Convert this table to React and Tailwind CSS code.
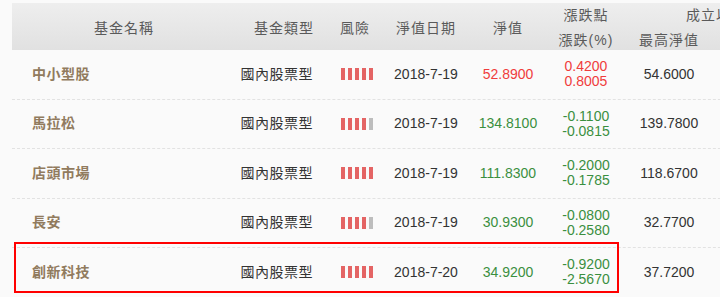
const funds = [
  { name: '中小型股', type: '國內股票型', risk: 5, date: '2018-7-19', nav: '52.8900', up: true, pts: '0.4200', pct: '0.8005', high: '54.6000' },
  { name: '馬拉松', type: '國內股票型', risk: 4, date: '2018-7-19', nav: '134.8100', up: false, pts: '-0.1100', pct: '-0.0815', high: '139.7800' },
  { name: '店頭市場', type: '國內股票型', risk: 5, date: '2018-7-19', nav: '111.8300', up: false, pts: '-0.2000', pct: '-0.1785', high: '118.6700' },
  { name: '長安', type: '國內股票型', risk: 4, date: '2018-7-19', nav: '30.9300', up: false, pts: '-0.0800', pct: '-0.2580', high: '32.7700' },
  { name: '創新科技', type: '國內股票型', risk: 5, date: '2018-7-20', nav: '34.9200', up: false, pts: '-0.9200', pct: '-2.5670', high: '37.7200' },
];

const COLS = 'grid grid-cols-[224px_88px_62px_80px_84px_72px_94px_90px]';

const RiskBars = ({ level }) => (
  <div className="flex items-center justify-center gap-[3px]">
    {[1, 2, 3, 4, 5].map((i) => (
      <span
        key={i}
        className={`block h-[12px] w-[4px] ${i <= level ? 'bg-[#e46464]' : 'bg-[#bdbdbd]'}`}
      />
    ))}
  </div>
);

export default function App() {
  return (
    <div
      className="relative h-[297px] w-[720px] overflow-hidden bg-[#fafafa] pt-[3px]"
      style={{ fontFamily: '"Liberation Sans", "Noto Sans CJK TC", sans-serif' }}
    >
      <div className="ml-[12px] w-[794px]">
        {/* header */}
        <div className={`${COLS} h-[47px] bg-gradient-to-b from-[#eeeeee] to-[#e1e1e1] text-[14px] text-[#5a5a5a]`}>
          <div className="flex items-center justify-center tracking-[1px]">基金名稱</div>
          <div className="flex items-center justify-end pr-[10px] tracking-[1px]">基金類型</div>
          <div className="flex items-center justify-center tracking-[1px]">風險</div>
          <div className="flex items-center justify-center tracking-[1px]">淨值日期</div>
          <div className="flex items-center justify-center tracking-[1px]">淨值</div>
          <div className="flex flex-col items-center justify-center leading-[25px] tracking-[1px]">
            <span>漲跌點</span>
            <span>漲跌(%)</span>
          </div>
          <div className="col-span-2 grid grid-cols-[94px_90px] leading-[25px] tracking-[1px]">
            <div className="col-span-2 text-center pl-[4px]">成立以來</div>
            <div className="text-center">最高淨值</div>
            <div className="text-center">最低淨值</div>
          </div>
        </div>

        {/* rows */}
        {funds.map((f) => (
          <div
            key={f.name}
            className={`${COLS} h-[49.5px] border-b border-dashed border-[#e2e2e2] text-[14px] text-[#333]`}
          >
            <div className="flex items-center pl-[20px] font-bold tracking-[0.5px] text-[#917b5e]">{f.name}</div>
            <div className="flex items-center justify-end pr-[11px] tracking-[0.5px] text-[#333]">{f.type}</div>
            <div className="flex items-center justify-center pl-[4px]">
              <RiskBars level={f.risk} />
            </div>
            <div className="flex items-center justify-center">{f.date}</div>
            <div className={`flex items-center justify-center ${f.up ? 'text-[#f03c3c]' : 'text-[#3a8f3f]'}`}>{f.nav}</div>
            <div className={`flex flex-col items-center justify-center leading-[15px] ${f.up ? 'text-[#f03c3c]' : 'text-[#3a8f3f]'}`}>
              <span>{f.pts}</span>
              <span>{f.pct}</span>
            </div>
            <div className="flex items-center justify-center">{f.high}</div>
            <div />
          </div>
        ))}
      </div>

      {/* highlight annotation */}
      <div className="absolute left-[14px] top-[242px] h-[51px] w-[605px] border-[2px] border-[#ff0000]" />
    </div>
  );
}
